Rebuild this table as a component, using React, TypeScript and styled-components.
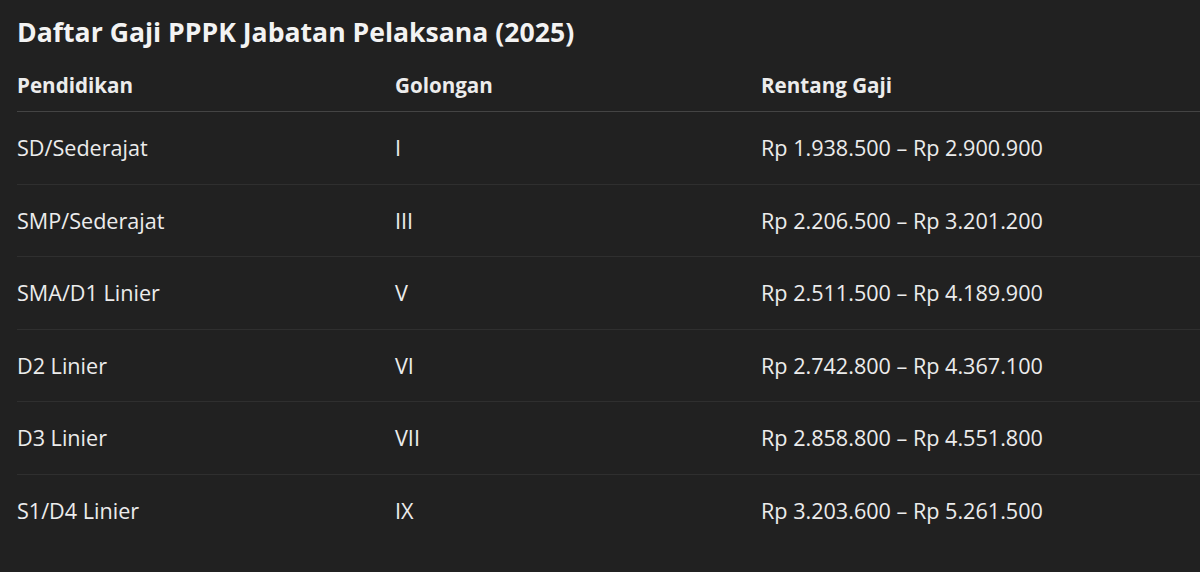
import { createGlobalStyle, styled } from "styled-components";

const GlobalStyle = createGlobalStyle`
  html, body {
    margin: 0;
    padding: 0;
    background: #212121;
  }
  body {
    font-family: "Open Sans", "Noto Sans", sans-serif;
    color: #ececec;
    overflow: hidden;
  }
`;

const Page = styled.div`
  padding: 14px 0 0 17px;
  width: 1240px;
`;

const Title = styled.h2`
  margin: 0 0 14px;
  font-size: 26.6px;
  font-weight: 700;
  line-height: 36px;
  color: #f3f3f3;
`;

const Table = styled.div`
  display: grid;
  grid-template-columns: 378px 366px 1fr;
`;

const Row = styled.div<{ $head?: boolean; $last?: boolean }>`
  display: contents;

  & > div {
    height: ${(p) => (p.$head ? "48px" : "72.5px")};
    border-bottom: 1px solid
      ${(p) => (p.$head ? "#444444" : p.$last ? "transparent" : "#2f2f2f")};
    font-weight: ${(p) => (p.$head ? 700 : 400)};
    font-size: ${(p) => (p.$head ? "20.6px" : "21.6px")};
    padding-bottom: ${(p) => (p.$head ? "6px" : "0")};
  }
`;

const Cell = styled.div`
  display: flex;
  align-items: center;
  white-space: nowrap;
  box-sizing: border-box;
`;

const rows = [
  ["SD/Sederajat", "I", "Rp 1.938.500 – Rp 2.900.900"],
  ["SMP/Sederajat", "III", "Rp 2.206.500 – Rp 3.201.200"],
  ["SMA/D1 Linier", "V", "Rp 2.511.500 – Rp 4.189.900"],
  ["D2 Linier", "VI", "Rp 2.742.800 – Rp 4.367.100"],
  ["D3 Linier", "VII", "Rp 2.858.800 – Rp 4.551.800"],
  ["S1/D4 Linier", "IX", "Rp 3.203.600 – Rp 5.261.500"],
];

export default function App() {
  return (
    <>
      <GlobalStyle />
      <Page>
        <Title>Daftar Gaji PPPK Jabatan Pelaksana (2025)</Title>
        <Table>
          <Row $head>
            <Cell>Pendidikan</Cell>
            <Cell>Golongan</Cell>
            <Cell>Rentang Gaji</Cell>
          </Row>
          {rows.map((r, i) => (
            <Row key={r[0]} $last={i === rows.length - 1}>
              <Cell>{r[0]}</Cell>
              <Cell>{r[1]}</Cell>
              <Cell>{r[2]}</Cell>
            </Row>
          ))}
        </Table>
      </Page>
    </>
  );
}
